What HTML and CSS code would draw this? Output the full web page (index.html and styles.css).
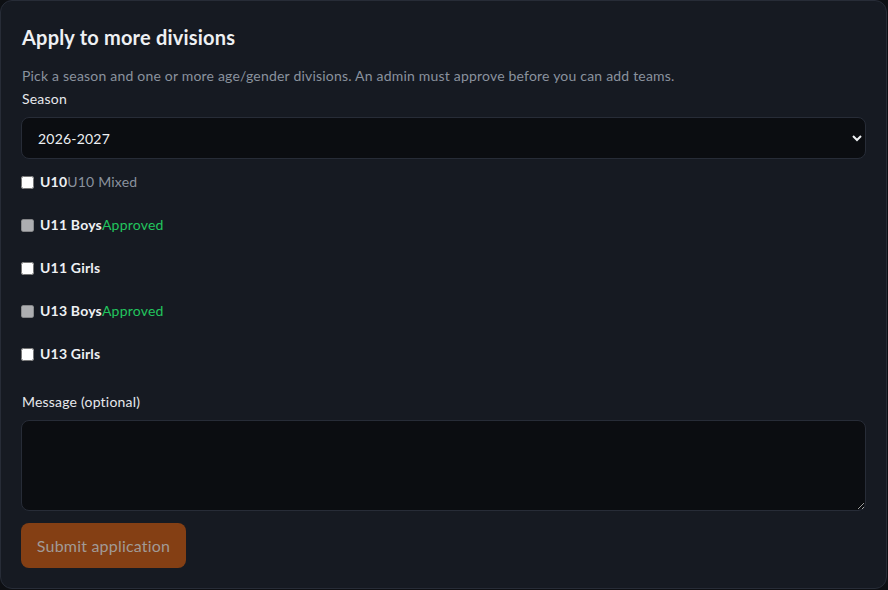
FILE: index.html
```html
<!DOCTYPE html>
<html lang="en">
<head>
<meta charset="utf-8">
<title>Apply to more divisions</title>
<link rel="stylesheet" href="styles.css">
</head>
<body>
<section class="card">
  <h2 class="title">Apply to more divisions</h2>
  <p class="desc">Pick a season and one or more age/gender divisions. An admin must approve before you can add teams.</p>
  <label class="field-label" for="season">Season</label>
  <select id="season" class="select">
    <option>2026-2027</option>
  </select>
  <div class="divisions">
    <label class="div-row"><input type="checkbox" class="cb"><span class="div-name">U10</span><span class="div-sub">U10 Mixed</span></label>
    <label class="div-row"><input type="checkbox" class="cb" disabled><span class="div-name">U11 Boys</span><span class="div-ok">Approved</span></label>
    <label class="div-row"><input type="checkbox" class="cb"><span class="div-name">U11 Girls</span></label>
    <label class="div-row"><input type="checkbox" class="cb" disabled><span class="div-name">U13 Boys</span><span class="div-ok">Approved</span></label>
    <label class="div-row"><input type="checkbox" class="cb"><span class="div-name">U13 Girls</span></label>
  </div>
  <label class="field-label msg-label" for="msg">Message (optional)</label>
  <textarea id="msg" class="textarea"></textarea>
  <button class="submit" disabled>Submit application</button>
</section>
</body>
</html>
```
FILE: styles.css
```css
html, body {
  margin: 0;
  padding: 0;
  background: #0d0f13;
}
body {
  font-family: "Lato", "Noto Sans", sans-serif;
  letter-spacing: 0.2px;
  color: #e6e8ec;
  width: 888px;
  height: 590px;
}
.card {
  box-sizing: border-box;
  width: 887px;
  height: 589px;
  background: #161a22;
  border: 1px solid #272c37;
  border-radius: 12px;
  padding: 20px 20px;
  display: flex;
  flex-direction: column;
  align-items: stretch;
}
.title {
  margin: 4px 0 0 1px;
  font-size: 20px;
  font-weight: 700;
  line-height: 24px;
  color: #eef0f3;
}
.desc {
  margin: 18px 0 0 1px;
  font-size: 14px;
  line-height: 18px;
  color: #8a929e;
}
.field-label {
  font-size: 14px;
  line-height: 18px;
  margin: 5px 0 0 1px;
  color: #e6e8ec;
}
.select {
  margin-top: 9px;
  height: 42px;
  background: #0b0d11;
  border: 1px solid #272c37;
  border-radius: 8px;
  color: #eef0f3;
  font-family: inherit;
  letter-spacing: inherit;
  font-size: 14px;
  padding: 0 12px;
  width: 100%;
  box-sizing: border-box;
}
.divisions {
  display: flex;
  flex-direction: column;
  margin-top: 14px;
  gap: 25px;
}
.div-row {
  display: flex;
  align-items: center;
  height: 18px;
  font-size: 14px;
  line-height: 18px;
}
.cb {
  margin: 0 6px 0 0;
  width: 13px;
  height: 13px;
}
.div-name {
  font-weight: 700;
  color: #eef0f3;
}
.div-sub {
  color: #8a929e;
}
.div-ok {
  color: #22c55e;
}
.msg-label {
  margin-top: 30px;
}
.textarea {
  margin-top: 9px;
  height: 91px;
  box-sizing: border-box;
  background: #0b0d11;
  border: 1px solid #272c37;
  border-radius: 8px;
  width: 100%;
  resize: vertical;
  color: #eef0f3;
}
.submit {
  margin-top: 12px;
  align-self: flex-start;
  width: 165px;
  height: 45px;
  background: #843f14;
  border: none;
  border-radius: 8px;
  color: #a19a96;
  font-family: inherit;
  letter-spacing: inherit;
  font-size: 16px;
}
```
